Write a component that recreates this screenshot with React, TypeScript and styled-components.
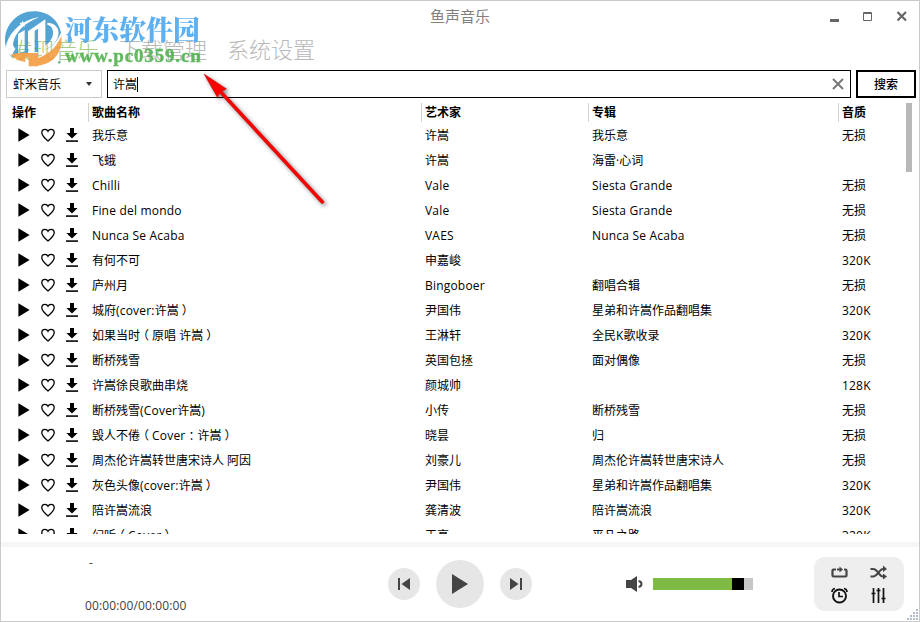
import React from "react";
import styled, { createGlobalStyle, css } from "styled-components";

const GlobalStyle = createGlobalStyle`
  * { box-sizing: border-box; }
  body {
    margin: 0;
    background: #fff;
    font-family: "Open Sans", "Noto Sans CJK SC", sans-serif;
    font-size: 12px;
    color: #000;
  }
`;

const Window = styled.div`
  position: relative;
  width: 920px;
  height: 622px;
  border: 1px solid #cacaca;
  background: #fff;
  display: flex;
  flex-direction: column;
  overflow: hidden;
`;

const TitleBar = styled.header`
  height: 30px;
  flex: none;
  display: grid;
  grid-template-columns: 1fr auto 1fr;
  align-items: center;
`;

const Title = styled.h1`
  grid-column: 2;
  margin: 0;
  font-size: 15px;
  line-height: 30px;
  font-weight: 400;
  color: #808080;
`;

const WindowButtons = styled.div`
  display: flex;
  justify-content: flex-end;
  gap: 23px;
  padding-right: 11px;
  svg { display: block; }
`;

const Tabs = styled.nav`
  flex: none;
  height: 39px;
  display: flex;
  gap: 20px;
  padding-left: 10px;
`;

const Tab = styled.a<{ $active?: boolean }>`
  font-size: 22px;
  line-height: 37px;
  font-weight: 300;
  color: ${(p) => (p.$active ? "#a6cc82" : "#b9b9b9")};
`;

const SearchRow = styled.div`
  flex: none;
  height: 28px;
  display: flex;
  padding: 0 3px 0 5px;
`;

const SourceSelect = styled.div`
  width: 96px;
  border: 1px solid #cacaca;
  display: flex;
  align-items: center;
  justify-content: space-between;
  padding: 0 9px 0 6px;
  margin-right: 5px;
`;

const SearchField = styled.div`
  flex: 1;
  border: 1px solid #000;
  display: flex;
  align-items: center;
  padding: 0 6px 0 5px;
  margin-right: 5px;
`;

const Caret = styled.span`
  width: 1px;
  height: 15px;
  background: #000;
  margin-right: auto;
`;

const SearchButton = styled.button`
  width: 60px;
  padding: 0;
  border: 2px solid #000;
  background: #fff;
  color: #000;
  font: 500 12px/22px "Noto Sans CJK SC", sans-serif;
`;

const Content = styled.main`
  flex: none;
  height: 436px;
  padding-top: 5px;
  display: flex;
`;

const Table = styled.div`
  width: 901px;
  display: flex;
  flex-direction: column;
`;

const columns = css`
  display: grid;
  grid-template-columns: 87px 333px 167px 250px 1fr;
`;

const HeadRow = styled.div`
  ${columns}
  height: 18px;
  flex: none;
  margin-bottom: 2px;
  font-weight: 700;
  line-height: 19px;
`;

const HeadCell = styled.div<{ $first?: boolean }>`
  border-left: ${(p) => (p.$first ? "0" : "1px solid #d2d2d2")};
  padding-left: ${(p) => (p.$first ? "11px" : "3px")};
`;

const Rows = styled.div`
  height: 411px;
  overflow: hidden;
`;

const Row = styled.div`
  ${columns}
  height: 25px;
  line-height: 25px;
  white-space: nowrap;
`;

const Cell = styled.div`
  padding-left: 4px;
`;

const Latin = styled.span`
  letter-spacing: 0.2px;
`;

/* Full-width punctuation whose ink sits in the middle of its cell. */
const WidePunct = styled.span<{ $shift: number }>`
  display: inline-block;
  width: 12px;
  text-indent: ${(p) => p.$shift}px;
`;

const Actions = styled.div`
  display: flex;
  align-items: center;
  padding: 0 0 1px 17px;
  gap: 11px;
  svg { display: block; flex: none; }
`;

const ScrollThumb = styled.div`
  width: 6px;
  height: 69px;
  margin-left: 4px;
  background: #b8b8b8;
`;

const Player = styled.footer`
  flex: 1;
  border-top: 5px solid #f6f6f6;
  margin-top: 8px;
  display: flex;
  align-items: flex-start;
`;

const TrackInfo = styled.div`
  width: 303px;
  padding: 8px 0 0 84px;
  color: #404040;
`;

const TrackName = styled.div`
  height: 43px;
  line-height: 16px;
  padding-left: 4px;
`;

const TrackTime = styled.div`
  line-height: 16px;
  letter-spacing: 0.12px;
`;

const Transport = styled.div`
  width: 228px;
  padding: 13px 0 0 84px;
  display: flex;
  align-items: center;
  gap: 16px;
`;

const RoundButton = styled.div<{ $size: number }>`
  flex: none;
  width: ${(p) => p.$size}px;
  height: ${(p) => p.$size}px;
  border-radius: 50%;
  background: #e6e6e6;
  svg { display: block; }
`;

const Volume = styled.div`
  display: flex;
  align-items: center;
  gap: 9px;
  width: 188px;
  margin-left: 94px;
  padding-top: 28px;
`;

const VolumeTrack = styled.div`
  width: 100px;
  height: 12px;
  display: flex;
  background: #c6c6c6;
`;

const VolumeFill = styled.div`
  width: 79px;
  background: #7fba44;
`;

const VolumeKnob = styled.div`
  width: 12px;
  background: #000;
`;

const ModePanel = styled.div`
  width: 90px;
  height: 54px;
  margin-top: 10px;
  border-radius: 11px;
  background: #eee;
  svg { display: block; }
`;

const Grip = styled.svg`
  position: absolute;
  right: 0;
  bottom: 0;
`;

const Watermark = styled.div`
  position: absolute;
  left: 3px;
  top: 9px;
  width: 210px;
  height: 62px;
  display: flex;
  opacity: 0.88;
  pointer-events: none;
`;

const WatermarkText = styled.div`
  padding: 2px 0 0 1px;
  white-space: nowrap;
`;

const WatermarkName = styled.div`
  font: 900 27px/34px "Noto Serif CJK SC", "Noto Sans CJK SC", serif;
  color: #4aa6ee;
`;

const WatermarkUrl = styled.div`
  font: bold 19px/20px "Liberation Serif", serif;
  letter-spacing: 0.85px;
  color: #4db04a;
  -webkit-text-stroke: 0.4px #4db04a;
`;

const PointerArrow = styled.svg`
  position: absolute;
  left: 189px;
  top: 59px;
`;

const PlayIcon = () => (
  <svg width="12" height="14" viewBox="0 0 12 14"><path d="M.4.3 11.6 7 .4 13.7Z" fill="#000" /></svg>
);
const HeartIcon = () => (
  <svg width="14" height="14" viewBox="0 0 14 14">
    <path d="M7 13C3.300 9.800 .8 7.500 .8 4.700 .8 2.700 2.200 1.300 4 1.300 5.300 1.300 6.400 2 7 3.200 7.600 2 8.700 1.300 10 1.300 11.800 1.300 13.200 2.700 13.200 4.700 13.200 7.500 10.700 9.800 7 13Z" fill="none" stroke="#000" strokeWidth="1.300" />
  </svg>
);
const DownloadIcon = () => (
  <svg width="12" height="14" viewBox="0 0 12 14">
    <path d="M4 0H8V5H11.600L6 10.500 .4 5H4Z" fill="#000" /><rect y="12.200" width="12" height="1.800" fill="#222" />
  </svg>
);

const LogoMark = () => (
  <svg width="60" height="62" viewBox="6 6 180 186">
    <defs>
      <mask id="mark">
        <rect width="200" height="200" fill="#fff" />
        <path d="M10 128C14 78 58 34 112 28 72 42 38 72 33 108Q32 116 40 122L28 144Z" fill="#000" />
        <path d="M48 78 68 66V130L48 136Z" fill="#000" />
        <path d="M78 70 130 34V132L108 142V62L98 68V136L78 136Z" fill="#000" />
        <path d="M136 50C158 54 162 92 130 112V124C182 102 182 46 136 44Z" fill="#000" />
      </mask>
    </defs>
    <path d="M10 110C2 58 42 10 96 10 140 10 170 38 177 74 166 100 150 116 128 126 100 138 60 130 30 148 18 136 12 124 10 110Z" fill="#3c98d0" mask="url(#mark)" />
    <path d="m62 38 3 6 7 1-5 5 1 7-6-4-6 4 1-7-5-5 7-1Z" fill="#fff" />
    <path d="M178 84C184 134 152 168 108 173V175H80V150L70 146V162Q40 156 26 140C50 132 68 134 82 135H108V150C140 140 164 118 178 84Z" fill="#f39a3c" />
    <circle cx="172" cy="163" r="4" fill="#5cb85c" />
  </svg>
);

const songs: [string, string, string, string][] = [
  ["我乐意", "许嵩", "我乐意", "无损"],
  ["飞蛾", "许嵩", "海雷·心词", ""],
  ["Chilli", "Vale", "Siesta Grande", "无损"],
  ["Fine del mondo", "Vale", "Siesta Grande", "无损"],
  ["Nunca Se Acaba", "VAES", "Nunca Se Acaba", "无损"],
  ["有何不可", "申嘉峻", "", "320K"],
  ["庐州月", "Bingoboer", "翻唱合辑", "无损"],
  ["城府(cover:许嵩）", "尹国伟", "星弟和许嵩作品翻唱集", "320K"],
  ["如果当时（原唱 许嵩）", "王淋轩", "全民K歌收录", "320K"],
  ["断桥残雪", "英国包拯", "面对偶像", "无损"],
  ["许嵩徐良歌曲串烧", "颜城帅", "", "128K"],
  ["断桥残雪(Cover许嵩)", "小传", "断桥残雪", "无损"],
  ["毁人不倦（Cover：许嵩）", "晓昙", "归", "无损"],
  ["周杰伦许嵩转世唐宋诗人 阿因", "刘豪儿", "周杰伦许嵩转世唐宋诗人", "无损"],
  ["灰色头像(cover:许嵩）", "尹国伟", "星弟和许嵩作品翻唱集", "320K"],
  ["陪许嵩流浪", "龚清波", "陪许嵩流浪", "320K"],
  ["幻听（Cover）", "王亮", "平凡之路", "320K"],
];

const punctShift: Record<string, number> = { "（": -3, "）": 3, "：": 3 };

/* Splits a label into CJK, Latin and full-width punctuation runs. */
const Label = ({ text }: { text: string }) => (
  <>
    {text.split(/([（）：]|[\x21-\x7e][\x20-\x7e]*)/).map((run, i) => {
      if (run in punctShift) return <WidePunct key={i} $shift={punctShift[run]}>{run}</WidePunct>;
      if (/^[\x21-\x7e]/.test(run)) return <Latin key={i}>{run}</Latin>;
      return run;
    })}
  </>
);

export default function App() {
  return (
    <>
      <GlobalStyle />
      <Window>
        <TitleBar>
          <Title>鱼声音乐</Title>
          <WindowButtons>
            <svg width="10" height="12"><path d="M0 9H9V12H0Z" fill="#666" /></svg>
            <svg width="10" height="12"><path d="M.5 2.500H8.500V10.500H.5ZM0 3.500H9" fill="none" stroke="#666" /></svg>
            <svg width="12" height="12"><path d="m1.500 2 8.500 8.500m0-8.500-8.500 8.500" stroke="#666" strokeWidth="2.200" /></svg>
          </WindowButtons>
        </TitleBar>
        <Tabs>
          <Tab $active>发现音乐</Tab>
          <Tab>下载管理</Tab>
          <Tab>系统设置</Tab>
        </Tabs>
        <SearchRow>
          <SourceSelect>
            虾米音乐
            <svg width="6" height="4"><path d="M0 0H6L3 4Z" fill="#333" /></svg>
          </SourceSelect>
          <SearchField>
            许嵩
            <Caret />
            <svg width="12" height="12"><path d="m1 1 10 10M11 1 1 11" stroke="#777" strokeWidth="2" /></svg>
          </SearchField>
          <SearchButton>搜索</SearchButton>
        </SearchRow>
        <Content>
          <Table>
            <HeadRow>
              <HeadCell $first>操作</HeadCell>
              <HeadCell>歌曲名称</HeadCell>
              <HeadCell>艺术家</HeadCell>
              <HeadCell>专辑</HeadCell>
              <HeadCell>音质</HeadCell>
            </HeadRow>
            <Rows>
              {songs.map(([name, artist, album, quality], i) => (
                <Row key={i}>
                  <Actions><PlayIcon /><HeartIcon /><DownloadIcon /></Actions>
                  <Cell><Label text={name} /></Cell>
                  <Cell><Label text={artist} /></Cell>
                  <Cell><Label text={album} /></Cell>
                  <Cell><Label text={quality} /></Cell>
                </Row>
              ))}
            </Rows>
          </Table>
          <ScrollThumb />
        </Content>
        <Player>
          <TrackInfo>
            <TrackName>-</TrackName>
            <TrackTime>00:00:00/00:00:00</TrackTime>
          </TrackInfo>
          <Transport>
            <RoundButton $size={32}>
              <svg width="32" height="32"><path d="M10 10H12V22H10ZM22 10V22L13.500 16Z" fill="#444" /></svg>
            </RoundButton>
            <RoundButton $size={48}>
              <svg width="48" height="48"><path d="M16 14 32 24 16 34Z" fill="#444" /></svg>
            </RoundButton>
            <RoundButton $size={32}>
              <svg width="32" height="32"><path d="M20 10H22V22H20ZM10 10V22L18.500 16Z" fill="#444" /></svg>
            </RoundButton>
          </Transport>
          <Volume>
            <svg width="18" height="18"><path d="M0 5H5L11 1V17L5 13H0Z" fill="#444" /><path d="M12.500 6C16.500 6.500 16.500 11.500 12.500 12" fill="none" stroke="#444" strokeWidth="2" /></svg>
            <VolumeTrack><VolumeFill /><VolumeKnob /></VolumeTrack>
          </Volume>
          <ModePanel>
            <svg width="90" height="54" fill="none">
              <path d="M22 12.500H19.500Q18.500 12.500 18.500 13.500V18.500Q18.500 19.500 19.500 19.500H31.500Q32.500 19.500 32.500 18.500V13.500Q32.500 12.500 31.500 12.500H30M23 12.500H27" stroke="#444" strokeWidth="2.200" />
              <path d="M25.500 9.500 29 12.500 25.500 15.500Z" fill="#444" />
              <path d="M56.500 12H59C64 12 65 19.500 69 19.500H71M56.500 19.500H59C64 19.500 65 12 69 12H71" stroke="#444" strokeWidth="2" />
              <path d="M69 8.500 73 12 69 15ZM69 16.500 73 19.500 69 22.500Z" fill="#444" />
              <circle cx="25.500" cy="39" r="6.500" stroke="#111" strokeWidth="1.900" />
              <path d="M25 35V39.500H29M18 35Q18 32 21 31.500M33 35Q33 32 30 31.500" stroke="#111" strokeWidth="1.700" />
              <path d="M59.500 31V46M64.500 31V46M69.500 31V46M57.500 36.500H61.500M62.500 33.500H66.500M67.500 41.500H71.500" stroke="#111" strokeWidth="1.700" />
            </svg>
          </ModePanel>
        </Player>
        <Grip width="12" height="12" fill="#b3bccb">
          <path d="M9 0h2v2h-2zM6 3h2v2h-2zM9 3h2v2h-2zM3 6h2v2h-2zM6 6h2v2h-2zM9 6h2v2h-2zM0 9h2v2h-2zM3 9h2v2h-2zM6 9h2v2h-2zM9 9h2v2h-2z" />
        </Grip>
        <Watermark>
          <LogoMark />
          <WatermarkText>
            <WatermarkName>河东软件园</WatermarkName>
            <WatermarkUrl>www.pc0359.cn</WatermarkUrl>
          </WatermarkText>
        </Watermark>
        <PointerArrow width="150" height="160">
          <defs>
            <filter id="soft" x="-20%" y="-20%" width="150%" height="150%">
              <feDropShadow dx="2" dy="2" stdDeviation="2" floodColor="#000" floodOpacity=".5" />
            </filter>
          </defs>
          <g filter="url(#soft)">
            <path d="M14 14 36.500 29 32 31 134 141.500Q134 144 131.500 143.500L29.500 33 27.500 37.500Z" fill="#f00" stroke="#a01010" strokeWidth=".5" />
          </g>
        </PointerArrow>
      </Window>
    </>
  );
}
